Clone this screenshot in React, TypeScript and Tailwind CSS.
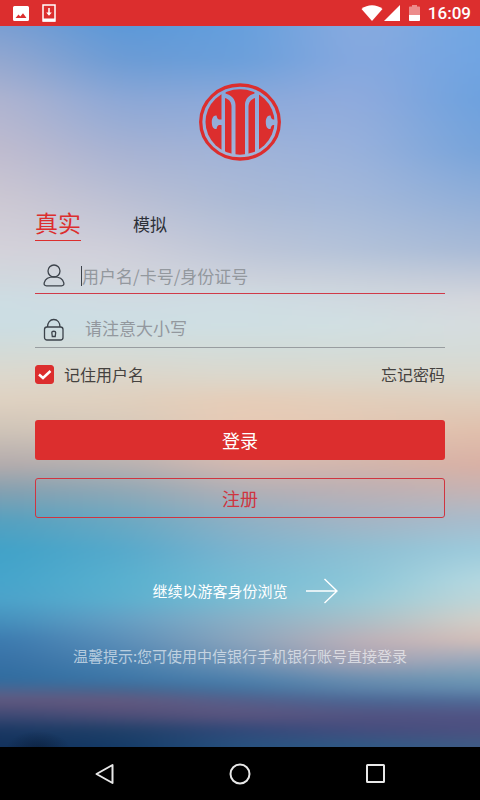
import { useState } from "react";

// Vertical colour stops of the sky, one list per column from left to right.
const skyRows = [0, 34, 74, 124, 174, 224, 254, 274, 299, 324, 349, 374, 404, 439, 464, 494, 524, 554, 574, 594, 614, 634, 654, 664, 674, 689, 704, 721];

const skyColumns = [
    ["#7d9fd2", "#95a8d0", "#b0b4d0", "#c0bccf", "#cdc8d3", "#d4d2da", "#d0d8de", "#cddde3", "#cbdde3", "#d3dbd8", "#dcd8cd", "#dfd2c2", "#cfc4b8", "#b3abac", "#85a0b0", "#55a0bf", "#40a2c8", "#45a4cb", "#4ba2ca", "#4490bd", "#3b7aaf", "#3771a6", "#2f6c9f", "#4d6590", "#62587f", "#3e4a75", "#1a3863", "#12305a"],
    ["#5b98d8", "#6b9bd5", "#8ba7d6", "#a6b2d3", "#bcc0d4", "#cfcfda", "#d3d6dd", "#d0dbe2", "#cddee4", "#d5dcd8", "#dcd6cb", "#dfd0be", "#d6c8ba", "#b6b0b0", "#8fa8b6", "#6aa8c2", "#55a9cb", "#58b0cf", "#5cafce", "#649fc4", "#5b8fb9", "#4b82b0", "#3c76a7", "#46658f", "#66597f", "#4f4f79", "#1f4068", "#143a66"],
    ["#659fdd", "#6a9fdb", "#8ba9da", "#a0b3d8", "#abbad6", "#bec6d8", "#cdd2dc", "#cfdde3", "#cfdfe3", "#d3dcd9", "#dbd8cd", "#e6cdb8", "#e8c9b4", "#d3b8b0", "#b3b0b6", "#8fb0c4", "#7db4cf", "#75bcd4", "#7cbcd2", "#8bb0c6", "#8ba5bd", "#7596b6", "#4d80ac", "#44729f", "#545f8b", "#5d557f", "#31497a", "#28527f"],
    ["#8aabdf", "#88a9df", "#90abdd", "#98b1dc", "#a3b8da", "#b3c2d9", "#c8d0db", "#d0d9e0", "#d1dfe2", "#d3dcd9", "#dad8cd", "#e2cebb", "#e3c6b2", "#d2b5ac", "#bcb0b4", "#a5b4c4", "#8dbfd3", "#8cc6d8", "#98c9d6", "#aabfc8", "#bdb0b8", "#aaa4b4", "#6a8eb0", "#5c81a8", "#4b6795", "#535381", "#454d7e", "#2f5a85"],
    ["#6fa6e3", "#6fa4e2", "#6ca1de", "#76a3da", "#90aed8", "#a8bad6", "#c4cbd9", "#d4d6dc", "#d6dcde", "#d5dbd8", "#dad8ce", "#dfcebd", "#e0bfac", "#d9b0a4", "#c6b3b3", "#a8bccc", "#9dcbdc", "#b5d8e0", "#c0d6d8", "#d3cfc8", "#d3beb8", "#9aa9bc", "#6d98b4", "#6389ad", "#506c98", "#505384", "#4c5080", "#3f5c85"],
];

function Sky() {
    return (
        <svg className="absolute inset-0 h-full w-full" viewBox="0 0 480 721" preserveAspectRatio="none" aria-hidden="true">
            <defs>
                {skyColumns.map((colors, i) => (
                    <linearGradient key={i} id={`sky${i}`} gradientUnits="userSpaceOnUse" x1="0" y1="0" x2="0" y2="721">
                        {colors.map((color, j) => (
                            <stop key={j} offset={skyRows[j] / 721} stopColor={color} />
                        ))}
                    </linearGradient>
                ))}
                {[1, 2, 3, 4].map((i) => (
                    <linearGradient key={i} id={`fade${i}`} gradientUnits="userSpaceOnUse" x1={(i - 1) * 120} y1="0" x2={i * 120} y2="0">
                        <stop offset="0" stopColor="#fff" stopOpacity="0" />
                        <stop offset="1" stopColor="#fff" />
                    </linearGradient>
                ))}
                {[1, 2, 3, 4].map((i) => (
                    <mask key={i} id={`mask${i}`} maskUnits="userSpaceOnUse" x="-100" y="-60" width="680" height="841">
                        <rect x="-100" y="-60" width="680" height="841" fill={`url(#fade${i})`} />
                    </mask>
                ))}
                {/* softens the seams between the columns */}
                <filter id="soften" filterUnits="userSpaceOnUse" x="-100" y="-60" width="680" height="841" colorInterpolationFilters="sRGB">
                    <feGaussianBlur stdDeviation="24 5" />
                </filter>
                <radialGradient id="hill">
                    <stop offset="0" stopColor="#0a1a33" stopOpacity="0.6" />
                    <stop offset="1" stopColor="#0a1a33" stopOpacity="0" />
                </radialGradient>
            </defs>
            <g filter="url(#soften)">
                <rect x="-100" y="-60" width="680" height="841" fill="url(#sky0)" />
                {[1, 2, 3, 4].map((i) => (
                    <rect key={i} x="-100" y="-60" width="680" height="841" fill={`url(#sky${i})`} mask={`url(#mask${i})`} />
                ))}
            </g>
            <ellipse cx="38" cy="723" rx="32" ry="18" fill="url(#hill)" />
        </svg>
    );
}

function StatusBar() {
    return (
        <header className="flex h-[26px] items-center justify-between bg-[#dc2e2e] pr-[9px] pl-[13px] text-white">
            <div className="flex items-center gap-[13px]">
                <svg width="16" height="15" viewBox="0 0 16 15" aria-hidden="true">
                    <path fillRule="evenodd" fill="#fff" d="M1.500 0h13A1.500 1.500 0 0 1 16 1.500v12a1.500 1.500 0 0 1-1.500 1.500h-13A1.500 1.500 0 0 1 0 13.500v-12A1.500 1.500 0 0 1 1.500 0ZM2.500 12h11L10 7.200 7.300 10.500 5.500 8.500Z" />
                </svg>
                <svg width="14" height="18" viewBox="0 0 14 18" fill="none" aria-hidden="true">
                    <path d="M1 1h12v16H1Z" stroke="#fff" strokeWidth="1.500" />
                    <path d="M1 16h12" stroke="#fff" strokeWidth="3" />
                    <path d="M7 4v6" stroke="#fff" strokeWidth="1.500" />
                    <path d="M4.200 8.500h5.600L7 11.700Z" fill="#fff" />
                </svg>
            </div>
            <div className="flex items-center">
                <svg width="22" height="16" viewBox="0 0 22 16" fill="#fff" aria-hidden="true">
                    <path d="M0.500 4C6.500-1 15.500-1 21.500 4L11 16Z" />
                </svg>
                <svg className="ml-px" width="16" height="16" viewBox="0 0 16 16" fill="#fff" aria-hidden="true">
                    <path d="M16 0v16H0Z" />
                </svg>
                <svg className="ml-[9px]" width="11" height="16" viewBox="0 0 11 16" fill="#fff" aria-hidden="true">
                    <path d="M3 0h5v1.500h2.200a.8.8 0 0 1 .8.8V10H0V2.300a.8.8 0 0 1 .8-.8H3Z" opacity="0.450" />
                    <path d="M0 10h11v5.200a.8.8 0 0 1-.8.8H.8a.8.8 0 0 1-.8-.8Z" />
                </svg>
                <time className="ml-2 font-['Roboto',sans-serif] text-[17px] leading-[26px] font-medium">16:09</time>
            </div>
        </header>
    );
}

function Logo() {
    return (
        <svg className="mx-auto" width="82" height="78" viewBox="0 0 82 78" role="img" aria-label="中信银行">
            <defs>
                <clipPath id="disc">
                    <ellipse cx="41" cy="39" rx="34.500" ry="32.800" />
                </clipPath>
            </defs>
            <ellipse cx="41" cy="39" rx="39.300" ry="37" fill="none" stroke="#dc2e2e" strokeWidth="3.300" />
            <g clipPath="url(#disc)" fill="#dc2e2e">
                <path d="M0 0H22.500V36.500H20C18.500 36 18 35 17.500 32.500C14.500 32 12.800 35 12.800 39.200C12.800 43.500 14.500 46.500 17.500 46C18 43.500 18.500 42.500 20 42H22.500V78H0Z" />
                <path d="M26 15C30 16 32.500 19 32.500 24V78H26Z" />
                <path d="M26.500 10.500V0H55.500V10.500C50 12 46 16 46 22V78H36.500V22C36.500 16 32 12 26.500 10.500Z" />
                <path d="M56 15C52.500 16 49.500 19 49.500 24V78H56Z" />
                <path d="M60 0H82V36.500H74C72.500 36 72 35 71.500 32.500C68.500 32 66.800 35 66.800 39.200C66.800 43.500 68.500 46.500 71.500 46C72 43.500 72.500 42.500 74 42H82V78H60Z" />
            </g>
        </svg>
    );
}

function UserIcon() {
    return (
        <svg width="22" height="23" viewBox="0 0 22 23" fill="none" stroke="#3c434b" strokeWidth="1.300" aria-hidden="true">
            <circle cx="11" cy="7" r="6" />
            <path d="M3.500 21.800H18.500C20.500 21.800 21.200 20.500 20.800 18.800C19.800 15.200 16 12.900 11 12.900S2.200 15.200 1.200 18.800C.8 20.500 1.500 21.800 3.500 21.800Z" />
        </svg>
    );
}

function LockIcon() {
    return (
        <svg width="22" height="23" viewBox="0 0 22 23" fill="none" stroke="#3c434b" strokeWidth="1.300" aria-hidden="true">
            <rect x="1.500" y="9" width="18.500" height="13" rx="2.500" />
            <path d="M4.500 9C4.500 4.500 7 1.500 10.750 1.500S17 4.500 17 9" />
            <path d="M9.300 18.500L8.800 14.500C8.800 12.800 12.700 12.800 12.700 14.500L12.200 18.500Z" />
        </svg>
    );
}

export default function App() {
    const [mode, setMode] = useState("real");
    const [username, setUsername] = useState("");
    const [password, setPassword] = useState("");
    const [remember, setRemember] = useState(true);

    const tabClass = (active: boolean) =>
        active
            ? "border-[#dc2e2e] text-[23px] leading-9 text-[#dc2e2e]"
            : "border-transparent text-[17px] leading-[42px] text-[#2d3038]";

    return (
        <div className="flex min-h-screen flex-col font-['Noto_Sans_CJK_SC',sans-serif]">
            <StatusBar />
            <main className="relative flex-1">
                <Sky />
                <form className="relative flex flex-col px-[35px] pt-[57px]" onSubmit={(e) => e.preventDefault()}>
                    <Logo />

                    <div className="mt-[42px] flex gap-[52px]">
                        <button type="button" className={`h-[38px] border-b ${tabClass(mode === "real")}`} onClick={() => setMode("real")}>
                            真实
                        </button>
                        <button type="button" className={`h-[38px] border-b ${tabClass(mode === "demo")}`} onClick={() => setMode("demo")}>
                            模拟
                        </button>
                    </div>

                    <div className="mt-[17px] flex h-9 items-center border-b border-[#d03a48] pl-2">
                        <UserIcon />
                        {username === "" && <span className="ml-4 h-5 w-px bg-[#3c434b]" />}
                        <input
                            className="min-w-0 flex-1 bg-transparent text-[17px] text-[#2d3038] outline-none placeholder:text-[#93989e]"
                            aria-label="用户名"
                            placeholder="用户名/卡号/身份证号"
                            value={username}
                            onChange={(e) => setUsername(e.target.value)}
                        />
                    </div>
                    <div className="mt-[18px] flex h-9 items-center border-b border-[#989da0] pl-2">
                        <LockIcon />
                        <input
                            className="ml-5 min-w-0 flex-1 bg-transparent pb-1 text-[17px] text-[#2d3038] outline-none placeholder:text-[#93989e]"
                            type="password"
                            aria-label="密码"
                            placeholder="请注意大小写"
                            value={password}
                            onChange={(e) => setPassword(e.target.value)}
                        />
                    </div>

                    <div className="mt-[14px] flex items-center justify-between text-base text-[#45423f]">
                        <label className="flex items-center gap-[10px]">
                            <span className="relative flex">
                                <input
                                    type="checkbox"
                                    className="size-[19px] appearance-none rounded-[3px] border border-[#dc2e2e] checked:bg-[#dc2e2e]"
                                    checked={remember}
                                    onChange={(e) => setRemember(e.target.checked)}
                                />
                                {remember && (
                                    <svg className="pointer-events-none absolute inset-0" width="19" height="19" viewBox="0 0 19 19" fill="none" stroke="#fff" strokeWidth="2.500" aria-hidden="true">
                                        <path d="M4 9.500L8 13L15.500 6" />
                                    </svg>
                                )}
                            </span>
                            记住用户名
                        </label>
                        <a href="#forgot">忘记密码</a>
                    </div>

                    <button type="submit" className="mt-[34px] h-10 rounded-[3px] bg-[#dc2e2e] text-lg text-white">
                        登录
                    </button>
                    <button type="button" className="mt-[18px] h-10 rounded-[3px] border border-[#cf3540] text-lg text-[#cf3540]">
                        注册
                    </button>

                    <a href="#guest" className="mt-[60px] ml-[10px] flex items-center justify-center gap-[18px] text-[15px] text-white">
                        继续以游客身份浏览
                        <svg width="32" height="26" viewBox="0 0 32 26" fill="none" stroke="#fff" strokeWidth="1.400" aria-hidden="true">
                            <path d="M0 13H31M18.500 1L31 13L18.500 25" />
                        </svg>
                    </a>
                    <p className="mt-[41px] text-center text-[15px] text-white/60">温馨提示:您可使用中信银行手机银行账号直接登录</p>
                </form>
            </main>
            <nav className="flex h-[53px] items-center justify-center gap-[115px] bg-black">
                <button type="button" aria-label="返回">
                    <svg width="20" height="22" viewBox="0 0 20 22" fill="none" stroke="#e8e8e8" strokeWidth="2" strokeLinejoin="round" aria-hidden="true">
                        <path d="M18.500 2V20L2.500 11Z" />
                    </svg>
                </button>
                <button type="button" aria-label="主页">
                    <svg width="22" height="22" viewBox="0 0 22 22" fill="none" stroke="#e8e8e8" strokeWidth="2" aria-hidden="true">
                        <circle cx="11" cy="11" r="9.500" />
                    </svg>
                </button>
                <button type="button" aria-label="最近任务">
                    <svg width="20" height="20" viewBox="0 0 20 20" fill="none" stroke="#e8e8e8" strokeWidth="2" aria-hidden="true">
                        <rect x="1" y="1" width="17" height="17" rx="0.500" />
                    </svg>
                </button>
            </nav>
        </div>
    );
}
